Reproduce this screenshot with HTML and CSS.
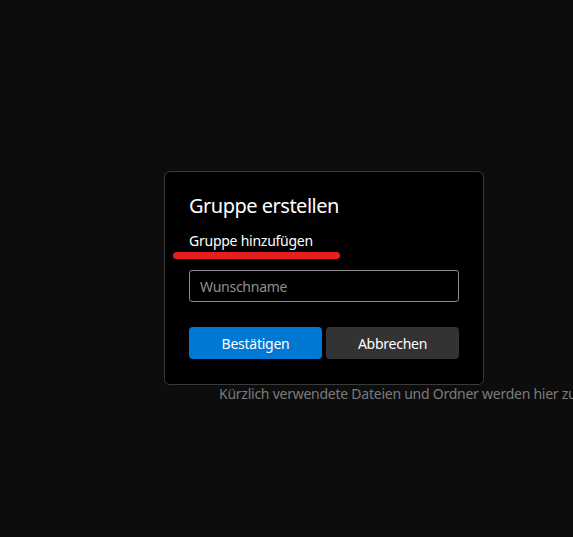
FILE: index.html
```html
<!DOCTYPE html>
<html lang="de">
<head>
<meta charset="utf-8">
<link rel="stylesheet" href="styles.css">
</head>
<body>
<main class="page">
  <p class="empty-note">Kürzlich verwendete Dateien und Ordner werden hier zu sehen sein.</p>
</main>
<div class="dialog" role="dialog">
  <h1 class="dialog-title">Gruppe erstellen</h1>
  <div class="dialog-label">
    <span>Gruppe hinzufügen</span>
    <span class="mark"></span>
  </div>
  <input class="name-input" type="text" placeholder="Wunschname">
  <div class="actions">
    <button class="btn btn-primary">Bestätigen</button>
    <button class="btn btn-secondary">Abbrechen</button>
  </div>
</div>
</body>
</html>
```
FILE: styles.css
```css
html, body {
  margin: 0;
  padding: 0;
  height: 100%;
  background: #0d0d0d;
  font-family: "Noto Sans", "Open Sans", sans-serif;
  overflow: hidden;
}
.page {
  height: 537px;
  width: 573px;
  overflow: hidden;
  padding: 384px 0 0 219px;
  box-sizing: border-box;
}
.empty-note {
  margin: 0;
  color: #7b7b7b;
  font-size: 14px;
  line-height: 19px;
  letter-spacing: -0.25px;
  white-space: nowrap;
}
.dialog {
  position: absolute;
  left: 164px;
  top: 171px;
  width: 320px;
  height: 214px;
  box-sizing: border-box;
  background: #000;
  border: 1px solid #3b3b3b;
  border-radius: 6px;
  padding: 20px 24px 24px 24px;
  display: flex;
  flex-direction: column;
}
.dialog-title {
  margin: 0;
  color: #fff;
  font-weight: 400;
  font-size: 20px;
  line-height: 28px;
  letter-spacing: -0.5px;
}
.dialog-label {
  position: relative;
  margin-top: 11px;
  color: #fff;
  font-size: 14px;
  line-height: 20px;
  letter-spacing: -0.25px;
}
.mark {
  position: absolute;
  left: -16px;
  top: 21px;
  width: 167px;
  height: 7px;
  border-radius: 4px;
  background: #e41e21;
}
.name-input {
  margin-top: 19px;
  height: 32px;
  box-sizing: border-box;
  width: 270px;
  background: #000;
  border: 1px solid #8a8a8a;
  border-radius: 3px;
  padding: 0 10px;
  color: #fff;
  font-family: inherit;
  font-size: 14px;
  letter-spacing: -0.25px;
  outline: none;
}
.name-input::placeholder {
  color: #8f8f8f;
}
.actions {
  margin-top: 25px;
  display: flex;
  gap: 4px;
  width: 270px;
}
.btn {
  flex: 1;
  height: 32px;
  border: none;
  border-radius: 4px;
  color: #fff;
  font-family: inherit;
  font-size: 14px;
  letter-spacing: -0.25px;
  padding: 0;
}
.btn-primary {
  background: #0078d4;
}
.btn-secondary {
  background: #333333;
}
```
